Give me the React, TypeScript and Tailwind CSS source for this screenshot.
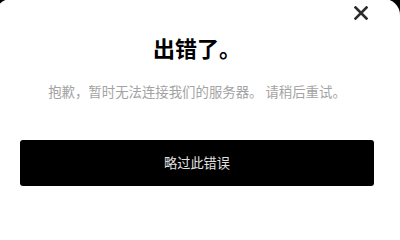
const FONT = '"Noto Sans CJK SC", "Noto Sans", sans-serif';

function CloseIcon() {
  return (
    <svg width="14" height="14" viewBox="0 0 14 14" fill="none" aria-hidden="true">
      <path d="M1.5 1.5 12.5 12.5M12.5 1.5 1.5 12.5" stroke="#2b2b2b" strokeWidth="2.6" strokeLinecap="square" />
    </svg>
  );
}

export default function App() {
  return (
    <div className="h-[204px] w-[400px] overflow-hidden bg-black" style={{ fontFamily: FONT }}>
      <div className="-ml-[5px] -mt-px flex h-[212px] w-[405px] flex-col rounded-t-2xl bg-white pl-[25px] pr-[26px]">
        <div className="flex justify-end pr-[6px] pt-[7px]">
          <button aria-label="关闭" className="flex h-[14px] w-[14px] items-center justify-center">
            <CloseIcon />
          </button>
        </div>

        <h1 className="mt-[13px] text-center text-[22px] font-bold leading-[28px] text-black">
          出错了。
        </h1>
        <p className="mt-[21px] text-center text-[13.4px] leading-[18px] text-[#a3a3a3]">
          抱歉，暂时无法连接我们的服务器。 请稍后重试。
        </p>

        <button className="mt-[40px] flex h-[46px] w-full items-center justify-center rounded-[3px] bg-black text-[13.2px] text-[#e2e2e2]">
          略过此错误
        </button>
      </div>
    </div>
  );
}
